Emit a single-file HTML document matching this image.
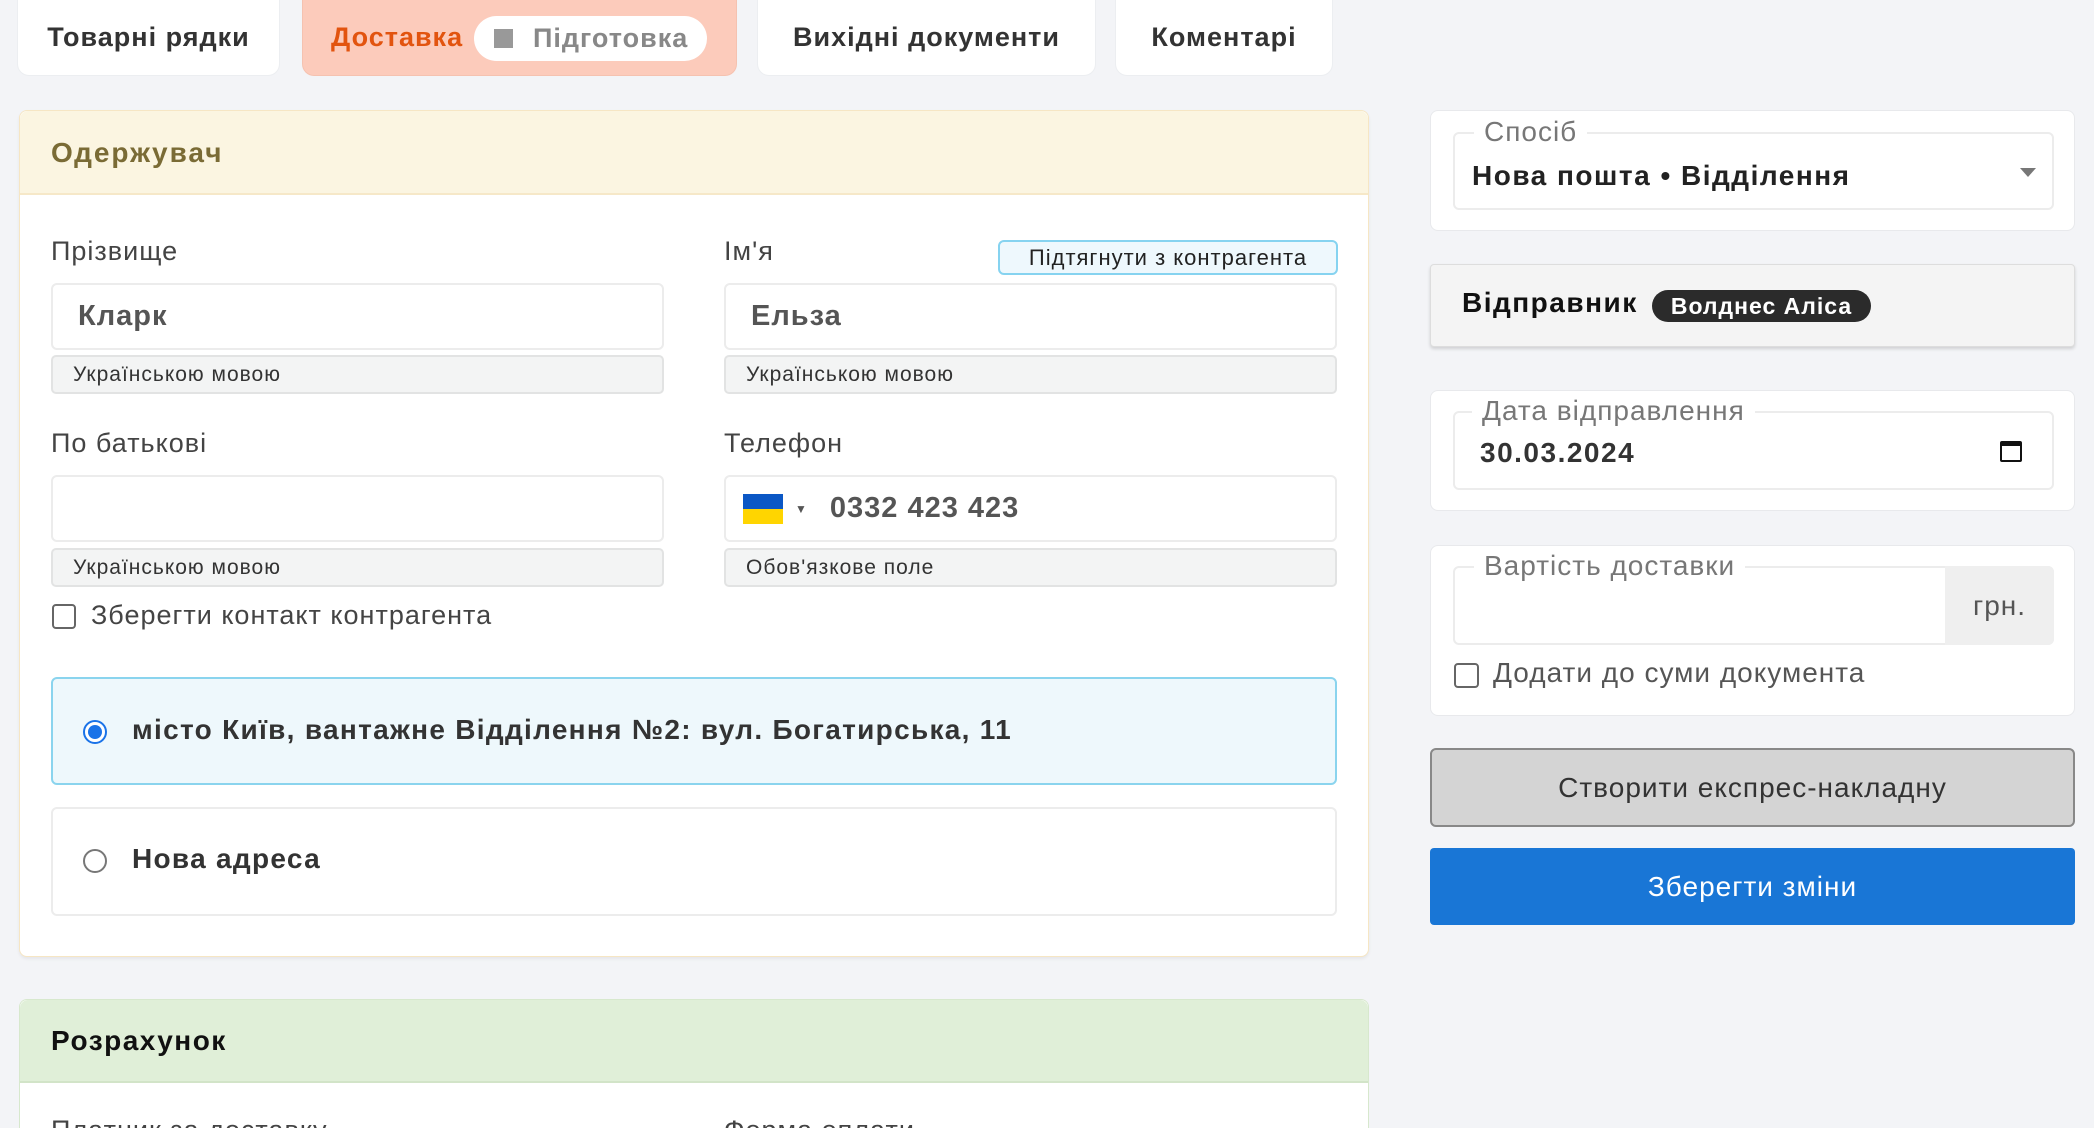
<!DOCTYPE html>
<html style="height:1128px;overflow:hidden"><head><meta charset="utf-8"><style>
*{box-sizing:border-box;margin:0;padding:0}
html,body{overflow:hidden}
body{width:2094px;height:1128px;background:#f3f4f7;font-family:"Liberation Sans",sans-serif;position:relative;color:#333;letter-spacing:1px}
.a{position:absolute}
.tab{position:absolute;top:0;height:76px;background:#fff;border:1px solid #eceef1;border-top:none;border-radius:0 0 12px 12px;font-weight:bold;font-size:27px;color:#333;display:flex;align-items:center;justify-content:center}
.card{position:absolute;background:#fff;border-radius:8px;border:1px solid #e8e9ec}
.lbl{position:absolute;font-size:27px;color:#444}
.inp{position:absolute;height:67px;background:#fff;border:2px solid #ececec;border-radius:6px;font-weight:bold;font-size:29px;color:#555;display:flex;align-items:center;padding-left:25px}
.help{position:absolute;height:39px;background:#f3f4f4;border:2px solid #e2e3e3;border-radius:5px;font-size:21px;color:#333;display:flex;align-items:center;padding-left:20px}
.fs{position:absolute;border:2px solid #ececec;border-radius:6px}
.leg{position:absolute;background:#fff;padding:0 10px;font-size:28px;color:#777;top:-20px;line-height:36px}
</style></head><body>
<div class="tab" style="left:17px;width:263px">Товарні рядки</div>
<div class="tab" style="left:302px;width:435px;background:#fccbbb;border-color:#f5c2b0;justify-content:flex-start;padding-left:28px"><span style="color:#e2540f">Доставка</span>
<span class="a" style="left:171px;top:16px;width:233px;height:45px;background:#fff;border-radius:23px;display:flex;align-items:center;color:#888;font-size:27px"><span style="display:inline-block;width:19px;height:19px;background:#999;margin:0 20px 0 20px"></span>Підготовка</span></div>
<div class="tab" style="left:757px;width:339px">Вихідні документи</div>
<div class="tab" style="left:1115px;width:218px">Коментарі</div>

<div class="card" style="left:19px;top:110px;width:1350px;height:847px;border-color:#f6e6c4;box-shadow:0 2px 3px rgba(0,0,0,.06)">
<div class="a" style="left:0;top:0;right:0;height:84px;background:#fbf5e1;border-bottom:2px solid #f6e8c8;border-radius:8px 8px 0 0"></div>
<div class="a" style="left:31px;top:24px;font-weight:bold;font-size:28px;color:#7a6b35;line-height:36px;letter-spacing:2px">Одержувач</div>
</div>
<div class="lbl" style="left:51px;top:236px">Прізвище</div>
<div class="lbl" style="left:724px;top:236px">Ім'я</div>
<div class="a" style="left:998px;top:240px;width:340px;height:35px;background:#eef8fd;border:2px solid #86d3f0;border-radius:6px;font-size:22px;color:#222;display:flex;align-items:center;justify-content:center">Підтягнути з контрагента</div>
<div class="inp" style="left:51px;top:283px;width:613px">Кларк</div>
<div class="inp" style="left:724px;top:283px;width:613px">Ельза</div>
<div class="help" style="left:51px;top:355px;width:613px">Українською мовою</div>
<div class="help" style="left:724px;top:355px;width:613px">Українською мовою</div>
<div class="lbl" style="left:51px;top:428px">По батькові</div>
<div class="lbl" style="left:724px;top:428px">Телефон</div>
<div class="inp" style="left:51px;top:475px;width:613px"></div>
<div class="inp" style="left:724px;top:475px;width:613px;padding-left:17px"><span style="display:inline-block;width:40px;height:30px;background:linear-gradient(#0b57c5 50%,#ffd500 50%)"></span><span style="font-size:12px;color:#555;margin:0 22px 0 12px">▼</span>0332 423 423</div>
<div class="help" style="left:51px;top:548px;width:613px">Українською мовою</div>
<div class="help" style="left:724px;top:548px;width:613px">Обов'язкове поле</div>
<div class="a" style="left:52px;top:604px;width:24px;height:25px;border:2px solid #666;border-radius:4px"></div>
<div class="lbl" style="left:91px;top:600px;color:#444">Зберегти контакт контрагента</div>
<div class="a" style="left:51px;top:677px;width:1286px;height:108px;background:#eef8fc;border:2px solid #8ad4ee;border-radius:6px"></div>
<div class="a" style="left:83px;top:720px;width:24px;height:24px;border:2px solid #1a73e8;border-radius:50%;background:#fff"><div class="a" style="left:3px;top:3px;width:14px;height:14px;border-radius:50%;background:#1a73e8"></div></div>
<div class="a" style="left:132px;top:714px;font-weight:bold;font-size:28px;color:#333;letter-spacing:1.3px">місто Київ, вантажне Відділення №2: вул. Богатирська, 11</div>
<div class="a" style="left:51px;top:807px;width:1286px;height:109px;background:#fff;border:2px solid #ececec;border-radius:6px"></div>
<div class="a" style="left:83px;top:849px;width:24px;height:24px;border:2px solid #777;border-radius:50%"></div>
<div class="a" style="left:132px;top:843px;font-weight:bold;font-size:28px;color:#333;letter-spacing:1.3px">Нова адреса</div>

<div class="card" style="left:19px;top:999px;width:1350px;height:140px;border-color:#d7e8cd">
<div class="a" style="left:0;top:0;right:0;height:83px;background:#e0efd8;border-bottom:2px solid #d2e4c8;border-radius:8px 8px 0 0"></div>
<div class="a" style="left:31px;top:23px;font-weight:bold;font-size:28px;color:#111;line-height:36px;letter-spacing:1.5px">Розрахунок</div>
<div class="a" style="left:31px;top:115px;font-size:27px;color:#444">Платник за доставку</div>
<div class="a" style="left:704px;top:115px;font-size:27px;color:#444">Форма оплати</div>
</div>

<div class="card" style="left:1430px;top:110px;width:645px;height:121px"></div>
<div class="fs" style="left:1453px;top:132px;width:601px;height:78px"><div class="leg" style="left:19px">Спосіб</div>
<div class="a" style="left:17px;top:26px;font-weight:bold;font-size:28px;color:#222;letter-spacing:1.5px">Нова пошта • Відділення</div>
<div class="a" style="right:16px;top:34px;width:0;height:0;border-left:8px solid transparent;border-right:8px solid transparent;border-top:9px solid #777"></div></div>

<div class="a" style="left:1430px;top:264px;width:645px;height:83px;background:#f4f4f4;border:1px solid #ddd;border-radius:4px;box-shadow:0 2px 3px rgba(0,0,0,.15)"></div>
<div class="a" style="left:1462px;top:287px;font-weight:bold;font-size:28px;color:#111;letter-spacing:1.5px">Відправник</div>
<div class="a" style="left:1652px;top:290px;width:219px;height:32px;background:#2b2b2b;border-radius:16px;color:#fff;font-weight:bold;font-size:23px;display:flex;align-items:center;justify-content:center">Волднес Аліса</div>

<div class="card" style="left:1430px;top:390px;width:645px;height:121px"></div>
<div class="fs" style="left:1453px;top:411px;width:601px;height:79px"><div class="leg" style="left:17px">Дата відправлення</div>
<div class="a" style="left:25px;top:24px;font-weight:bold;font-size:28px;color:#333;letter-spacing:1.5px">30.03.2024</div>
<div class="a" style="right:30px;top:28px;width:22px;height:21px;border:2px solid #111;border-top-width:5px;border-radius:2px"></div></div>

<div class="card" style="left:1430px;top:545px;width:645px;height:171px"></div>
<div class="fs" style="left:1453px;top:566px;width:601px;height:79px"><div class="leg" style="left:19px">Вартість доставки</div>
<div class="a" style="right:-2px;top:-2px;width:109px;height:79px;background:#efefef;border-radius:0 6px 6px 0;font-size:28px;color:#555;display:flex;align-items:center;justify-content:center">грн.</div></div>
<div class="a" style="left:1454px;top:663px;width:25px;height:25px;border:2px solid #666;border-radius:4px"></div>
<div class="a" style="left:1493px;top:657px;font-size:28px;color:#555">Додати до суми документа</div>

<div class="a" style="left:1430px;top:748px;width:645px;height:79px;background:#d4d4d4;border:2px solid #888;border-radius:6px;font-size:28px;color:#333;display:flex;align-items:center;justify-content:center">Створити експрес-накладну</div>
<div class="a" style="left:1430px;top:848px;width:645px;height:77px;background:#1976d6;border-radius:4px;font-size:28px;color:#fff;display:flex;align-items:center;justify-content:center">Зберегти зміни</div>
</body></html>
